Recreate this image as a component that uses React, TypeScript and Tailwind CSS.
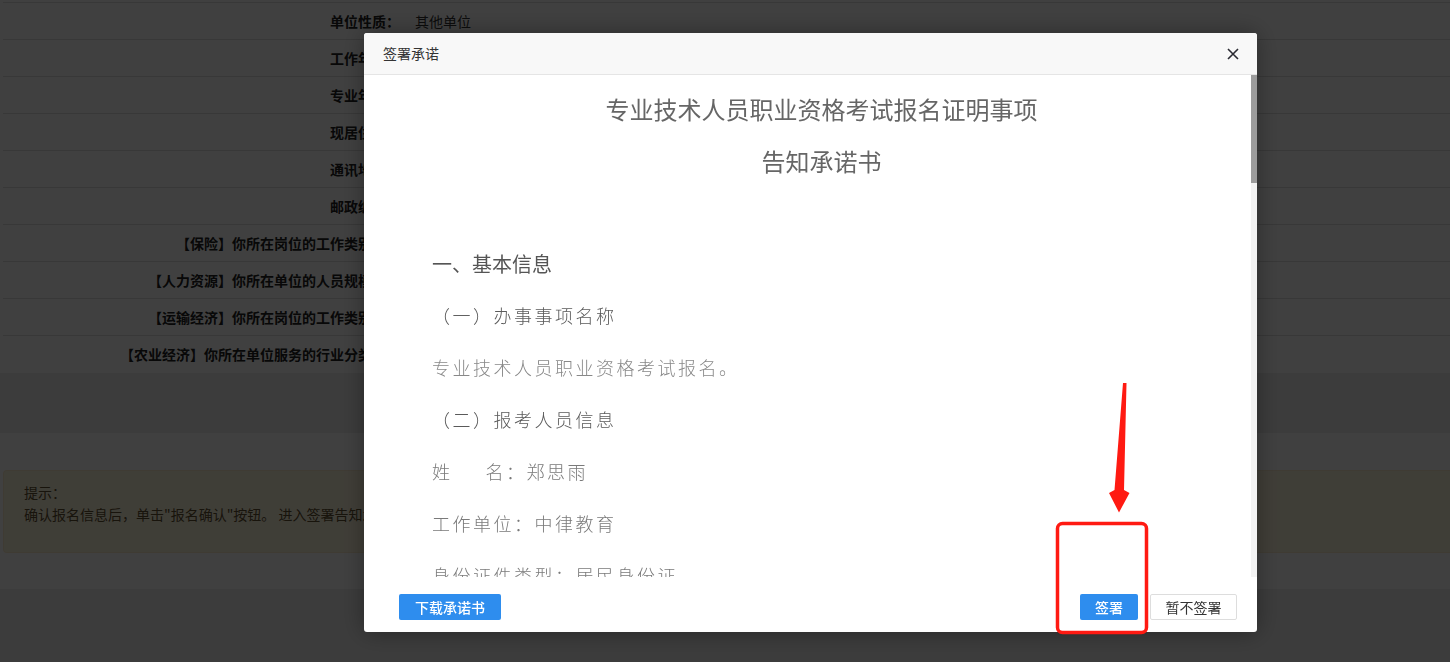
import React from 'react';

const rows: [string, string][] = [
  ['单位性质：', '其他单位'],
  ['工作年限：', '5年'],
  ['专业年限：', '3年'],
  ['现居住地：', '北京市'],
  ['通讯地址：', '北京市海淀区'],
  ['邮政编码：', '100000'],
  ['【保险】你所在岗位的工作类别为：', '其他'],
  ['【人力资源】你所在单位的人员规模为：', '100人以下'],
  ['【运输经济】你所在岗位的工作类别为：', '其他'],
  ['【农业经济】你所在单位服务的行业分类为：', '其他'],
];

export default function App() {
  return (
    <div className="relative h-[662px] w-[1450px] overflow-hidden bg-white font-['Noto_Sans_CJK_SC','Noto_Sans',sans-serif] text-[14px] text-[#333]">
      {/* background page */}
      <div className="flex h-full flex-col">
        <div className="pl-[3px] pt-[2px]">
          <div className="border-t border-[#dddddd]">
            {rows.map(([label, value], i) => (
              <div
                key={i}
                className={`flex h-[37px] items-center ${i < rows.length - 1 ? 'border-b border-[#dddddd]' : ''}`}
              >
                <div className="w-[397px] shrink-0 whitespace-nowrap text-right font-bold text-[#222]">{label}</div>
                <div className="pl-[15px] text-[#333]">{value}</div>
              </div>
            ))}
          </div>
        </div>
        <div className="h-[60px] bg-[#ededed]" />
        <div className="bg-white pl-[3px] pt-[37px] pb-[36px]">
          <div className="h-[83px] rounded-l-[4px] border border-r-0 border-[#faebcc] bg-[#fcf6dc] pl-[20px] pt-[10px] leading-[22px] text-[#5f5030]">
            <div>提示：</div>
            <div>确认报名信息后，单击"报名确认"按钮。 进入签署告知承诺书页面，阅读并签署告知承诺书后，完成报名确认。</div>
          </div>
        </div>
        <div className="flex-1 bg-[#ededed]" />
      </div>

      {/* mask */}
      <div className="fixed inset-0 bg-[rgba(0,0,0,0.75)]" />

      {/* modal */}
      <div className="fixed left-[364px] top-[33px] flex h-[599px] w-[893px] flex-col overflow-hidden rounded-[3px] bg-white shadow-[0_0_24px_rgba(0,0,0,0.35)]">
        <div className="flex h-[42px] shrink-0 items-center justify-between border-b border-[#e5e5e5] bg-[#f8f8f8] pl-[19px] pr-[18px]">
          <span className="text-[14px] text-[#333]">签署承诺</span>
          <svg width="12" height="12" viewBox="0 0 12 12" className="block">
            <path d="M1 1 L11 11 M11 1 L1 11" stroke="#2b2b33" strokeWidth="1.6" fill="none" />
          </svg>
        </div>
        <div className="flex min-h-0 flex-1">
          <div className="min-w-0 flex-1 overflow-hidden pl-[68px] pr-[40px] pt-[8px]">
            <p className="text-center text-[24px] leading-[52px] text-[#666]">专业技术人员职业资格考试报名证明事项</p>
            <p className="text-center text-[24px] leading-[52px] text-[#666]">告知承诺书</p>
            <p className="h-[51px]" />
            <p className="text-[20px] leading-[51px] text-[#555]">一、基本信息</p>
            <p className="text-[18px] font-light leading-[52px] tracking-[2.5px] text-[#5a5a5a]">（一）办事事项名称</p>
            <p className="text-[18px] font-light leading-[52px] tracking-[2.5px] text-[#888]">专业技术人员职业资格考试报名。</p>
            <p className="text-[18px] font-light leading-[52px] tracking-[2.5px] text-[#5a5a5a]">（二）报考人员信息</p>
            <p className="text-[18px] font-light leading-[52px] tracking-[2.5px] text-[#7a7a7a]">
              姓<span className="inline-block w-[33px]" />名：郑思雨
            </p>
            <p className="text-[18px] font-light leading-[52px] tracking-[2.5px] text-[#7a7a7a]">工作单位：中律教育</p>
            <p className="text-[18px] font-light leading-[52px] tracking-[2.5px] text-[#7a7a7a]">身份证件类型：居民身份证</p>
            <p className="text-[18px] font-light leading-[52px] tracking-[2.5px] text-[#7a7a7a]">身份证件号码：</p>
          </div>
          <div className="w-[6px] shrink-0 bg-[#f3f3f3]">
            <div className="h-[108px] bg-[#9c9c9c]" />
          </div>
        </div>
        <div className="flex h-[55px] shrink-0 items-start justify-between pl-[35px] pr-[20px] pt-[17px]">
          <button className="h-[26px] w-[102px] rounded-[2px] bg-[#2e8dee] text-[14px] font-medium text-white">下载承诺书</button>
          <div className="flex gap-[12px]">
            <button className="h-[26px] w-[58px] rounded-[2px] bg-[#2e8dee] text-[14px] font-medium text-white">签署</button>
            <button className="h-[26px] w-[87px] rounded-[2px] border border-[#dddddd] bg-white text-[14px] text-[#333]">暂不签署</button>
          </div>
        </div>
      </div>

      {/* red annotation */}
      <svg className="pointer-events-none fixed inset-0" width="1450" height="662" viewBox="0 0 1450 662">
        <polygon
          points="1123,383 1126.5,383 1124,490 1129.5,493 1119,512.5 1109,493 1114.5,490"
          fill="#ff1a12"
        />
        <rect x="1057.5" y="523.5" width="89" height="109" rx="5" ry="5" fill="none" stroke="#ff1a12" strokeWidth="3.5" />
      </svg>
    </div>
  );
}
